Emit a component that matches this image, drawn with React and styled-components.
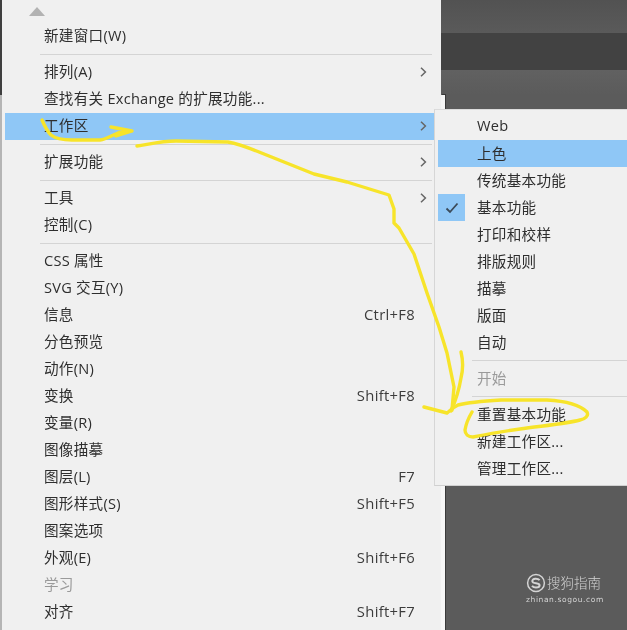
import React from 'react';
import styled, { createGlobalStyle } from 'styled-components';

const Global = createGlobalStyle`
  html, body { margin: 0; padding: 0; background: #5a5a5a; }
  body { font-family: "Open Sans", "Noto Sans CJK SC", sans-serif; }
`;

const Page = styled.div`
  position: relative;
  display: flex;
  width: 627px;
  height: 630px;
  overflow: hidden;
  filter: blur(0.5px);
`;

const Sliver = styled.div`
  flex: 0 0 2px;
  background: linear-gradient(to bottom, #3f3f3f 0, #3f3f3f 95px, #b5b5b5 95px);
`;

const Menu = styled.nav`
  flex: 0 0 439px;
  box-sizing: border-box;
  padding: 0 6px 0 3px;
  background: #f0f0f0;
  color: #2e2e2e;
  font-size: 14.6px;
  letter-spacing: 0.25px;
`;

const ScrollUp = styled.div`
  display: flex;
  align-items: flex-start;
  height: 22.5px;
  padding: 7px 0 0 24px;
  box-sizing: border-box;
`;

const Row = styled.div`
  display: flex;
  align-items: center;
  box-sizing: border-box;
  height: 27px;
  padding-left: ${p => p.$inset}px;
  padding-bottom: 3px;
  background: ${p => (p.$active ? '#8fc7f6' : 'transparent')};
  color: ${p => (p.$disabled ? '#9a9a9a' : '#2e2e2e')};
  white-space: nowrap;
`;

const Label = styled.span`
  flex: 1;
`;

const Shortcut = styled.span`
  font-size: 14.8px;
  letter-spacing: 0.3px;
  color: #3c3c3c;
`;

const ChevronSlot = styled.span`
  display: flex;
  align-items: center;
  flex: 0 0 20px;
  padding-left: 5px;
  padding-top: 3px;
  box-sizing: border-box;
`;

const Separator = styled.div`
  display: flex;
  align-items: center;
  height: 9px;
  margin-left: ${p => p.$left}px;
  margin-right: ${p => p.$right}px;
  &::before {
    content: '';
    flex: 1;
    height: 1px;
    background: #d4d4d4;
  }
`;

const Backdrop = styled.div`
  flex: 1;
  display: flex;
  flex-direction: column;
`;

const Band = styled.div`
  flex: 0 0 ${p => p.$h}px;
  background: ${p => p.$bg};
`;

const Canvas = styled.div`
  position: relative;
  flex: 1;
  border-left: 4px solid #f6f6f6;
  background: #5b5b5b;
  box-shadow: inset 1px 0 0 #3a3a3a;
  &::before {
    content: '';
    position: absolute;
    left: -3px;
    top: -1px;
    width: 4px;
    height: 1px;
    background: #3a3a3a;
  }
`;

const SubMenu = styled.div`
  position: absolute;
  left: 434px;
  top: 109px;
  width: 193px;
  height: 377px;
  box-sizing: border-box;
  padding: 3px 0 0 3px;
  background: #f0f0f0;
  border-left: 1px solid #d6d6d6;
  border-top: 1px solid #dcdcdc;
  border-bottom: 1px solid #d0d0d0;
  color: #2e2e2e;
  font-size: 14.6px;
  letter-spacing: 0.25px;
`;

const CheckCell = styled.span`
  position: absolute;
  left: 0;
  top: 0;
  display: flex;
  align-items: center;
  justify-content: center;
  width: 27px;
  height: 27px;
  background: #8fc7f6;
`;

const SubRow = styled(Row)`
  position: relative;
`;

const Annotation = styled.svg`
  position: absolute;
  left: 0;
  top: 0;
  width: 627px;
  height: 630px;
  pointer-events: none;
`;

const Watermark = styled.div`
  position: absolute;
  left: 526px;
  top: 572px;
  width: 82px;
  color: #d4d4d4;
`;

const MarkRow = styled.div`
  display: flex;
  align-items: center;
  gap: 1px;
`;

const MarkName = styled.span`
  font-size: 13.5px;
  line-height: 22px;
  font-weight: 300;
  white-space: nowrap;
`;

const MarkUrl = styled.div`
  margin-top: 1px;
  font-family: "DejaVu Sans", sans-serif;
  font-size: 7.5px;
  line-height: 10px;
  letter-spacing: 0.6px;
  white-space: nowrap;
`;

const Chevron = () => (
  <svg width="7" height="10" viewBox="0 0 7 10">
    <path d="M1 .8 5.4 5 1 9.2" fill="none" stroke="#666" strokeWidth="1.5" />
  </svg>
);

const Check = () => (
  <svg width="14" height="12" viewBox="0 0 14 12">
    <path d="M1.5 6.5 5 10 12.5 1.5" fill="none" stroke="#3b4a58" strokeWidth="1.8" />
  </svg>
);

const mainItems = [
  { t: '新建窗口(W)' }, 'sep',
  { t: '排列(A)', sub: 1 }, { t: '查找有关 Exchange 的扩展功能...' }, { t: '工作区', sub: 1, active: 1 }, 'sep',
  { t: '扩展功能', sub: 1 }, 'sep',
  { t: '工具', sub: 1 }, { t: '控制(C)' }, 'sep',
  { t: 'CSS 属性' }, { t: 'SVG 交互(Y)' }, { t: '信息', key: 'Ctrl+F8' }, { t: '分色预览' }, { t: '动作(N)' },
  { t: '变换', key: 'Shift+F8' }, { t: '变量(R)' }, { t: '图像描摹' }, { t: '图层(L)', key: 'F7' },
  { t: '图形样式(S)', key: 'Shift+F5' }, { t: '图案选项' }, { t: '外观(E)', key: 'Shift+F6' },
  { t: '学习', disabled: 1 }, { t: '对齐', key: 'Shift+F7' },
];

const subItems = [
  { t: 'Web' }, { t: '上色', active: 1 }, { t: '传统基本功能' }, { t: '基本功能', checked: 1 }, { t: '打印和校样' },
  { t: '排版规则' }, { t: '描摹' }, { t: '版面' }, { t: '自动' }, 'sep',
  { t: '开始', disabled: 1 }, 'sep',
  { t: '重置基本功能' }, { t: '新建工作区...' }, { t: '管理工作区...' },
];

const yellow = [
  'M42 120 C45 127 47 131 51 135 C56 139 63 140 72 140 L100 140 C107 139 112 135 118 133 L132 131 L111 127 M132 131 L116 136',
  'M137 146 C150 144 162 141 176 141 L228 142 C240 144 252 149 264 154 L314 174 L347 182 L389 195 L394 209 L394 223 L399 228 L414 254 L427 293 L439 327 L447 353 L454 387 L452 410',
  'M461 352 C463 360 463 370 461 378 C459 390 456 400 451 411',
  'M424 407 L447 413 C450 411 452 408 458 405 C470 402 485 401 501 400 L547 400 C565 401 580 405 587 412 C589 416 585 419 580 420 C565 424 540 426 520 429 C505 431 488 434 473 437 C468 437 465 434 465 430 C466 424 469 417 472 412',
];

export default function App() {
  return (
    <Page>
      <Global />
      <Sliver />
      <Menu>
        <ScrollUp>
          <svg width="16" height="9" viewBox="0 0 16 9"><path d="M8 0 16 9H0Z" fill="#b2b2b2" /></svg>
        </ScrollUp>
        {mainItems.map((it, i) =>
          it === 'sep' ? (
            <Separator key={i} $left={35} $right={3} />
          ) : (
            <Row key={i} $inset={39} $active={it.active} $disabled={it.disabled}>
              <Label>{it.t}</Label>
              {it.key && <Shortcut>{it.key}</Shortcut>}
              <ChevronSlot>{it.sub && <Chevron />}</ChevronSlot>
            </Row>
          )
        )}
      </Menu>
      <Backdrop>
        <Band $h={33} $bg="linear-gradient(#525252,#5a5a5a)" />
        <Band $h={37} $bg="#424242" />
        <Band $h={25} $bg="linear-gradient(#616161,#5b5b5b)" />
        <Canvas />
      </Backdrop>
      <SubMenu>
        {subItems.map((it, i) =>
          it === 'sep' ? (
            <Separator key={i} $left={34} $right={0} />
          ) : (
            <SubRow key={i} $inset={39} $active={it.active} $disabled={it.disabled}>
              {it.checked && <CheckCell><Check /></CheckCell>}
              <Label>{it.t}</Label>
            </SubRow>
          )
        )}
      </SubMenu>
      <Annotation viewBox="0 0 627 630">
        {yellow.map((d, i) => (
          <path key={i} d={d} fill="none" stroke="#f7e42a" strokeWidth="3.4" strokeLinecap="round" strokeLinejoin="round" />
        ))}
      </Annotation>
      <Watermark>
        <MarkRow>
          <svg width="20" height="20" viewBox="0 0 20 20">
            <circle cx="10" cy="10" r="8.4" fill="none" stroke="#d4d4d4" strokeWidth="1.5" />
            <path d="M13.6 7.2C12.6 6 11 5.6 9.3 5.7 7.4 5.8 6.2 6.8 6.3 8.2 6.4 9.6 8 10 10 10.3 12 10.6 13.6 11 13.6 12.3 13.6 13.8 11.9 14.6 10 14.6 8.4 14.6 7 14 6 12.8" fill="none" stroke="#d4d4d4" strokeWidth="2" />
          </svg>
          <MarkName>搜狗指南</MarkName>
        </MarkRow>
        <MarkUrl>zhinan.sogou.com</MarkUrl>
      </Watermark>
    </Page>
  );
}
